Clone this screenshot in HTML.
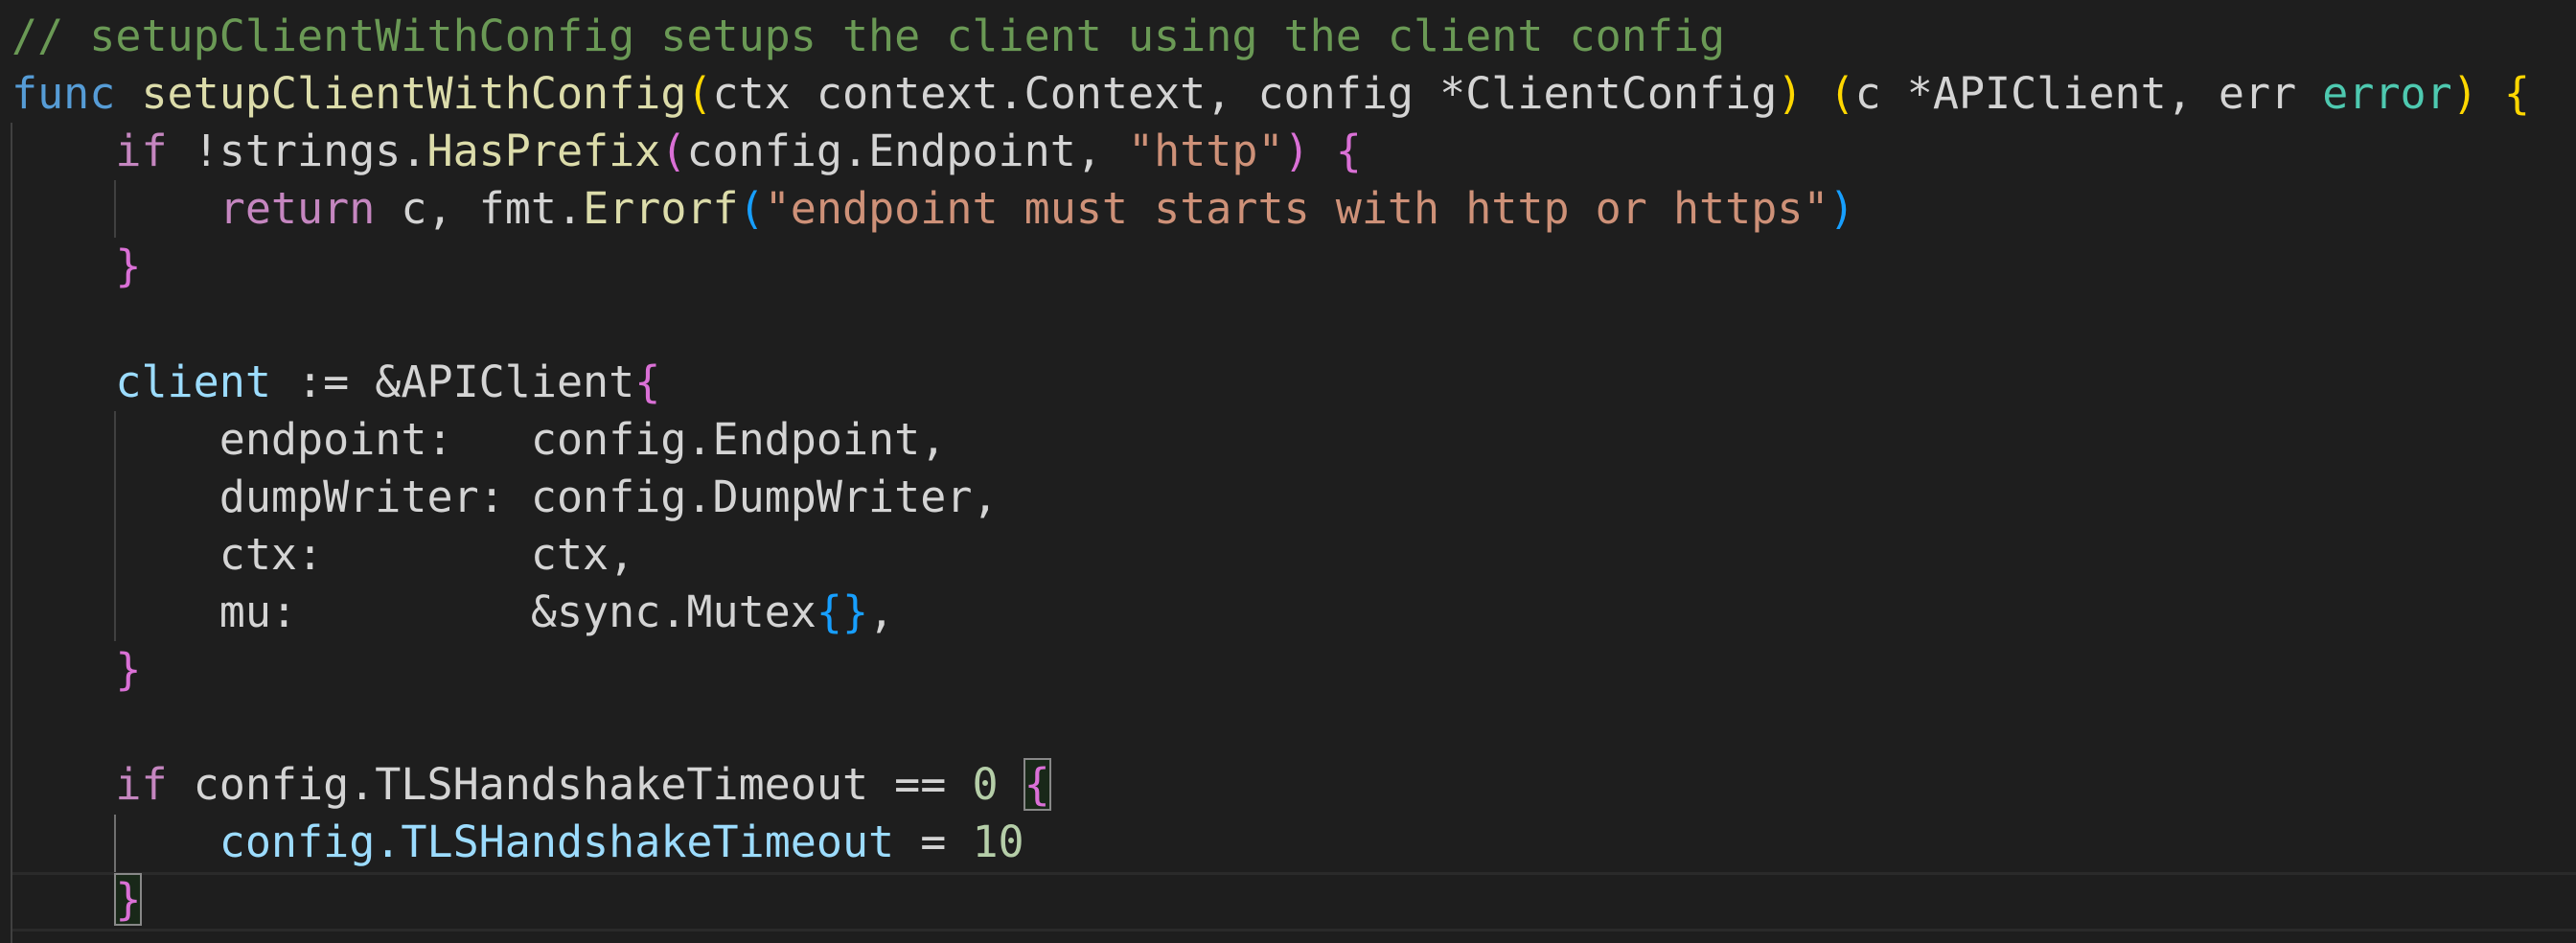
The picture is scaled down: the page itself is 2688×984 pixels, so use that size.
<!DOCTYPE html>
<html><head><meta charset="utf-8"><style>
html,body{margin:0;padding:0;background:#1e1e1e;width:2688px;height:984px;overflow:hidden}
.code{position:absolute;left:12px;top:8px;font-family:"DejaVu Sans Mono","Liberation Mono",monospace;font-size:45px;line-height:60.1px;color:#d4d4d4;white-space:pre}
.l{height:60.1px}
.c{color:#6a9955}.k{color:#569cd6}.f{color:#dcdcaa}.v{color:#9cdcfe}.x{color:#c586c0}.s{color:#ce9178}.n{color:#b5cea8}.t{color:#4ec9b0}
.g{color:#ffd700}.p{color:#da70d6}.b{color:#179fff}
.m{outline:2px solid #888;outline-offset:-1px;background:rgba(0,100,0,.15)}
.guide{position:absolute;width:2px;background:#404040}
.cur{position:absolute;left:12px;right:0;top:910px;height:56px;border-top:3px solid #2a2a2a;border-bottom:3px solid #2a2a2a}
</style></head><body>
<div class="cur"></div>
<div class="guide" style="left:11px;top:128px;height:856px"></div>
<div class="guide" style="left:119px;top:188px;height:60px"></div>
<div class="guide" style="left:119px;top:429px;height:240px"></div>
<div class="guide" style="left:119px;top:850px;height:60px;background:#707070"></div>
<div class="code"><div class="l"><span class="c">// setupClientWithConfig setups the client using the client config</span></div><div class="l"><span class="k">func</span> <span class="f">setupClientWithConfig</span><span class="g">(</span>ctx context.Context, config *ClientConfig<span class="g">)</span> <span class="g">(</span>c *APIClient, err <span class="t">error</span><span class="g">)</span> <span class="g">{</span></div><div class="l">    <span class="x">if</span> !strings.<span class="f">HasPrefix</span><span class="p">(</span>config.Endpoint, <span class="s">"http"</span><span class="p">)</span> <span class="p">{</span></div><div class="l">        <span class="x">return</span> c, fmt.<span class="f">Errorf</span><span class="b">(</span><span class="s">"endpoint must starts with http or https"</span><span class="b">)</span></div><div class="l">    <span class="p">}</span></div><div class="l"> </div><div class="l">    <span class="v">client</span> := &amp;APIClient<span class="p">{</span></div><div class="l">        endpoint:   config.Endpoint,</div><div class="l">        dumpWriter: config.DumpWriter,</div><div class="l">        ctx:        ctx,</div><div class="l">        mu:         &amp;sync.Mutex<span class="b">{}</span>,</div><div class="l">    <span class="p">}</span></div><div class="l"> </div><div class="l">    <span class="x">if</span> config.TLSHandshakeTimeout == <span class="n">0</span> <span class="p m">{</span></div><div class="l">        <span class="v">config.TLSHandshakeTimeout</span> = <span class="n">10</span></div><div class="l">    <span class="p m">}</span></div></div>
</body></html>
